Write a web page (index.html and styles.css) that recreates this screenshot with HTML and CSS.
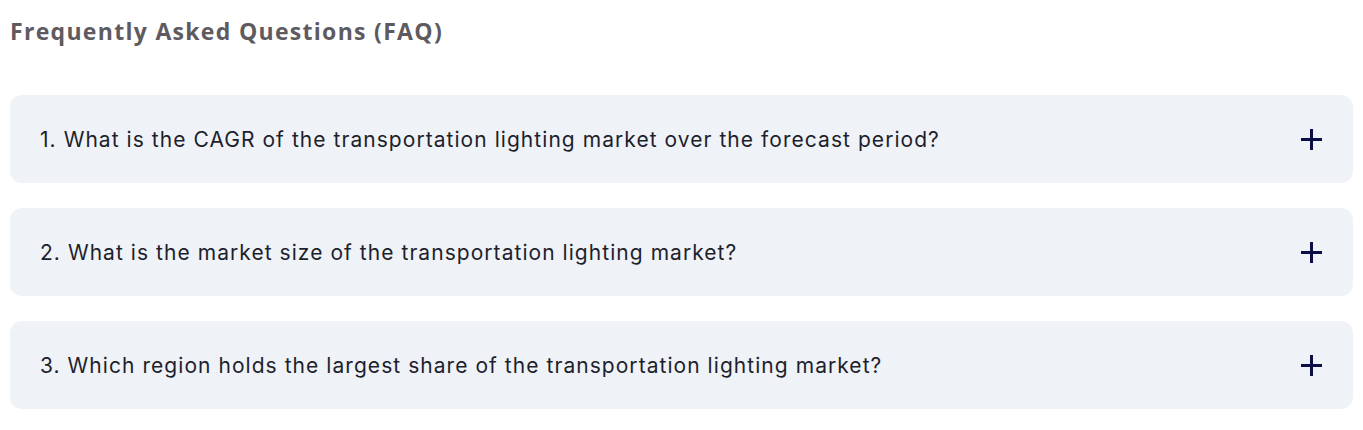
FILE: index.html
```html
<!DOCTYPE html>
<html lang="en">
<head>
<meta charset="utf-8">
<title>FAQ</title>
<link rel="stylesheet" href="styles.css">
</head>
<body>
<section class="faq">
  <h2 class="faq-title">Frequently Asked Questions (FAQ)</h2>
  <div class="faq-list">
    <div class="faq-item">
      <span class="faq-q">1. What is the CAGR of the transportation lighting market over the forecast period?</span>
      <svg class="faq-icon" viewBox="0 0 21 21" width="21" height="21"><path d="M10.5 0V21M0 10.5H21" stroke="#0b0f45" stroke-width="3" fill="none"/></svg>
    </div>
    <div class="faq-item">
      <span class="faq-q">2. What is the market size of the transportation lighting market?</span>
      <svg class="faq-icon" viewBox="0 0 21 21" width="21" height="21"><path d="M10.5 0V21M0 10.5H21" stroke="#0b0f45" stroke-width="3" fill="none"/></svg>
    </div>
    <div class="faq-item">
      <span class="faq-q">3. Which region holds the largest share of the transportation lighting market?</span>
      <svg class="faq-icon" viewBox="0 0 21 21" width="21" height="21"><path d="M10.5 0V21M0 10.5H21" stroke="#0b0f45" stroke-width="3" fill="none"/></svg>
    </div>
  </div>
</section>
</body>
</html>
```
FILE: styles.css
```css
html, body {
  margin: 0;
  padding: 0;
  background: #ffffff;
}
.faq {
  padding: 16px 10px 0 10px;
}
.faq-title {
  margin: 0;
  font-family: "Open Sans", "Liberation Sans", sans-serif;
  font-weight: 700;
  font-size: 23px;
  line-height: 30px;
  letter-spacing: 1.3px;
  color: #5e5a60;
}
.faq-list {
  margin-top: 49px;
  display: flex;
  flex-direction: column;
  gap: 25px;
}
.faq-item {
  height: 88px;
  box-sizing: border-box;
  background: #eff2f7;
  border-radius: 12px;
  padding: 0 31px 0 30px;
  display: flex;
  align-items: center;
  justify-content: space-between;
}
.faq-q {
  font-family: "Inter", "Noto Sans", sans-serif;
  font-size: 21px;
  letter-spacing: 1.05px;
  color: #1e1f2c;
}
.faq-icon {
  flex: none;
}
```
